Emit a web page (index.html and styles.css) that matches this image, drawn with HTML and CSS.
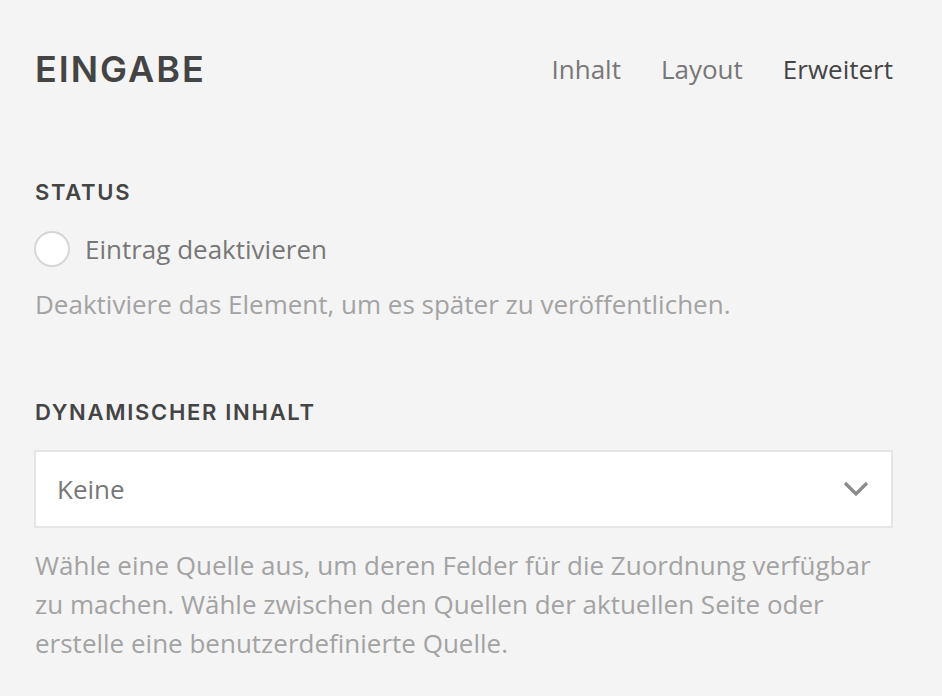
FILE: index.html
```html
<!DOCTYPE html>
<html lang="de">
<head>
<meta charset="utf-8">
<title>Eingabe</title>
<link rel="stylesheet" href="styles.css">
</head>
<body>
<div class="panel">
  <header class="head">
    <h1 class="title">EINGABE</h1>
    <nav class="tabs">
      <a class="tab">Inhalt</a>
      <a class="tab">Layout</a>
      <a class="tab active">Erweitert</a>
    </nav>
  </header>

  <section class="field field-status">
    <h2 class="label">STATUS</h2>
    <label class="check">
      <span class="radio"></span>
      <span class="check-text">Eintrag deaktivieren</span>
    </label>
    <p class="help">Deaktiviere das Element, um es später zu veröffentlichen.</p>
  </section>

  <section class="field field-dynamic">
    <h2 class="label">DYNAMISCHER INHALT</h2>
    <div class="select">
      <span class="select-value">Keine</span>
      <svg class="chevron" width="26" height="16" viewBox="0 0 26 16"><path d="M2 2 L13 13 L24 2" fill="none" stroke="#8a8a8a" stroke-width="3.2"/></svg>
    </div>
    <p class="help help-multi">Wähle eine Quelle aus, um deren Felder für die Zuordnung verfügbar zu machen. Wähle zwischen den Quellen der aktuellen Seite oder erstelle eine benutzerdefinierte Quelle.</p>
  </section>
</div>
</body>
</html>
```

FILE: styles.css
```css
html, body {
  margin: 0;
  padding: 0;
  background: #f4f4f4;
}
body {
  font-family: "Open Sans", "Liberation Sans", sans-serif;
}
.panel {
  padding: 44px 49px 0 34px;
}
.head {
  display: flex;
  justify-content: space-between;
  align-items: center;
}
.title {
  margin: 0;
  font-family: Inter, "Liberation Sans", sans-serif;
  font-weight: 600;
  font-size: 36px;
  line-height: 50px;
  color: #444;
  letter-spacing: 2px;
  padding-left: 1px;
}
.tabs {
  display: flex;
  gap: 40px;
}
.tab {
  font-size: 26px;
  line-height: 40px;
  color: #777;
}
.tab.active {
  color: #444;
}
.field-status {
  margin-top: 83px;
}
.label {
  margin: 0;
  font-family: Inter, "Liberation Sans", sans-serif;
  font-weight: 600;
  font-size: 22px;
  line-height: 30px;
  letter-spacing: 1.7px;
  color: #444;
  padding-left: 1px;
}
.check {
  display: flex;
  align-items: center;
  gap: 15px;
  margin-top: 22px;
}
.radio {
  width: 32px;
  height: 32px;
  border: 2px solid #d6d6d6;
  border-radius: 50%;
  background: #fff;
}
.check-text {
  font-size: 26px;
  line-height: 40px;
  color: #777;
}
.help {
  margin: 15px 0 0 1px;
  font-size: 26px;
  line-height: 40px;
  color: #a3a3a3;
}
.field-dynamic {
  margin-top: 73px;
}
.select {
  margin-top: 23px;
  height: 74px;
  border: 2px solid #e5e5e5;
  background: #fff;
  display: flex;
  align-items: center;
  justify-content: space-between;
  padding: 0 22px 0 21px;
}
.select-value {
  font-size: 26px;
  color: #777;
}
.chevron {
  display: block;
}
.help-multi {
  margin-top: 18px;
  line-height: 39px;
}
```
